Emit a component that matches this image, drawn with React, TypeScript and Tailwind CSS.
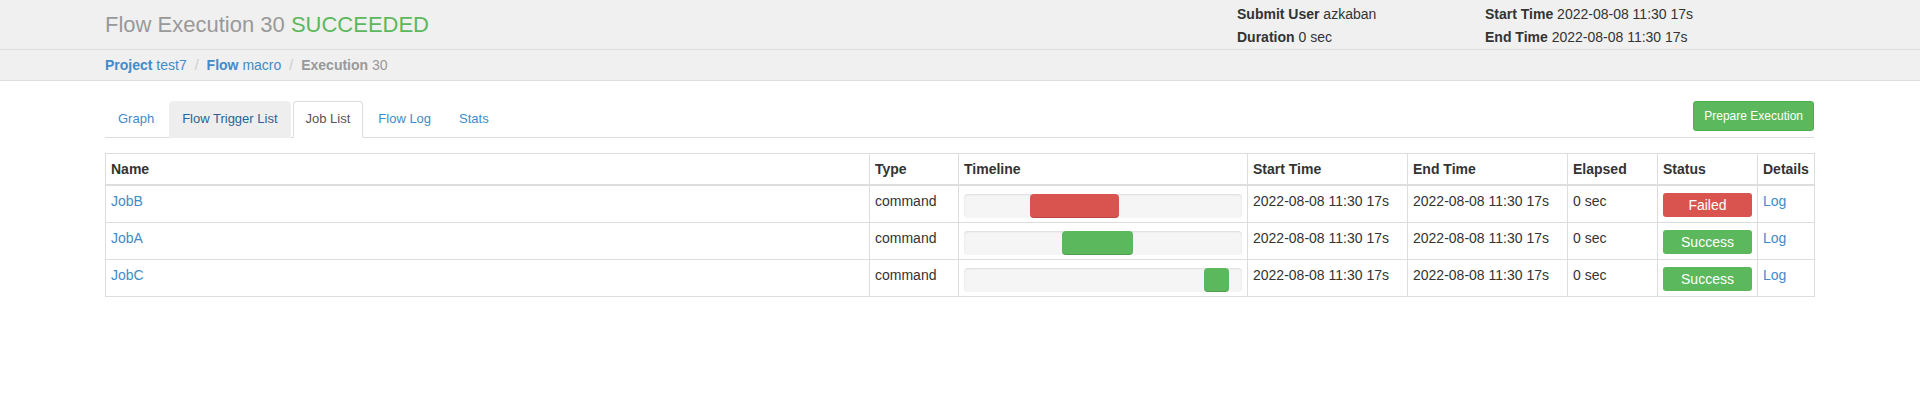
import React from 'react';

type Job = {
  name: string;
  type: string;
  offset: number;
  width: number;
  status: 'Failed' | 'Success';
};

const TIME = '2022-08-08 11:30 17s';

// 3 jobs of the flow, offset/width in % of the timeline track
const jobs: Job[] = [
  { name: 'JobB', type: 'command', offset: 23.7, width: 32, status: 'Failed' },
  { name: 'JobA', type: 'command', offset: 35.3, width: 25.6, status: 'Success' },
  { name: 'JobC', type: 'command', offset: 86.3, width: 8.9, status: 'Success' },
];

const tabs = ['Graph', 'Flow Trigger List', 'Job List', 'Flow Log', 'Stats'];

const App: React.FC = () => {
  return (
    <div className="min-h-[403px] bg-white font-['Liberation_Sans',Arial,sans-serif] text-sm leading-5 text-[#333]">
      {/* page header */}
      <div className="border-b border-[#ddd] bg-[#f0f0f0]">
        <div className="flex pl-[105px] pr-[106px]">
          <h1 className="flex-1 py-3 text-[22px] leading-[25px] text-[#999]">
            Flow Execution 30 <span className="text-[#5cb85c]">SUCCEEDED</span>
          </h1>
          <div className="grid w-[577px] grid-cols-[248px_1fr] pt-1">
            <div>
              <b>Submit User</b> azkaban
            </div>
            <div>
              <b>Start Time</b> {TIME}
            </div>
            <div>
              <b>Duration</b> 0 sec
            </div>
            <div>
              <b>End Time</b> {TIME}
            </div>
          </div>
        </div>
      </div>

      {/* breadcrumb */}
      <div className="border-b border-[#ddd] bg-[#f0f0f0] py-[5px] pl-[105px] pr-[106px]">
        <a className="text-[#428bca]">
          <b>Project</b> test7
        </a>
        <span className="px-2 text-[#ccc]">/</span>
        <a className="text-[#428bca]">
          <b>Flow</b> macro
        </a>
        <span className="px-2 text-[#ccc]">/</span>
        <span className="text-[#999]">
          <b>Execution</b> 30
        </span>
      </div>

      <div className="pl-[105px] pr-[106px] pt-5">
        {/* tabs */}
        <div className="flex items-start border-b border-[#ddd]">
          {tabs.map((t) => {
            const active = t === 'Job List';
            const hover = t === 'Flow Trigger List';
            return (
              <a
                key={t}
                className={
                  active
                    ? '-mb-px mr-[2px] rounded-t border border-[#ddd] border-b-white bg-white px-3 pb-[8px] pt-[7px] text-[13px] text-[#555]'
                    : hover
                      ? '-mb-px mr-[2px] rounded-t border border-[#eee] bg-[#eee] px-3 pb-[8px] pt-[7px] text-[13px] text-[#2a6496]'
                      : '-mb-px mr-[2px] rounded-t border border-transparent px-3 pb-[8px] pt-[7px] text-[13px] text-[#428bca]'
                }
              >
                {t}
              </a>
            );
          })}
          <button className="ml-auto rounded-[3px] border border-[#4cae4c] bg-[#5cb85c] px-[10px] py-[5px] text-xs leading-[18px] text-white">
            Prepare Execution
          </button>
        </div>

        {/* job list */}
        <table className="mt-[15px] w-full table-fixed border-collapse border border-[#ddd]">
          <colgroup>
            <col className="w-[764px]" />
            <col className="w-[89px]" />
            <col className="w-[289px]" />
            <col className="w-[160px]" />
            <col className="w-[160px]" />
            <col className="w-[90px]" />
            <col className="w-[100px]" />
            <col className="w-[57px]" />
          </colgroup>
          <thead>
            <tr>
              {['Name', 'Type', 'Timeline', 'Start Time', 'End Time', 'Elapsed', 'Status', 'Details'].map((h) => (
                <th key={h} className="border border-b-2 border-[#ddd] p-[5px] text-left font-bold">
                  {h}
                </th>
              ))}
            </tr>
          </thead>
          <tbody>
            {jobs.map((j) => (
              <tr key={j.name}>
                <td className="border border-[#ddd] p-[5px] align-top">
                  <a className="text-[#428bca]">{j.name}</a>
                </td>
                <td className="border border-[#ddd] p-[5px] align-top">{j.type}</td>
                <td className="border border-[#ddd] px-[5px] pb-[4px] pt-[8px] align-top">
                  <div className="flex h-6 rounded bg-[#f5f5f5] shadow-[inset_0_1px_2px_rgba(0,0,0,0.1)]">
                    <div
                      className={
                        j.status === 'Failed'
                          ? 'h-6 rounded bg-[#d9534f] shadow-[inset_0_-1px_0_rgba(0,0,0,0.15)]'
                          : 'h-6 rounded bg-[#5cb85c] shadow-[inset_0_-1px_0_rgba(0,0,0,0.15)]'
                      }
                      style={{ marginLeft: `${j.offset}%`, width: `${j.width}%` }}
                    />
                  </div>
                </td>
                <td className="border border-[#ddd] p-[5px] align-top">{TIME}</td>
                <td className="border border-[#ddd] p-[5px] align-top">{TIME}</td>
                <td className="border border-[#ddd] p-[5px] align-top">0 sec</td>
                <td className="border border-[#ddd] px-[5px] pb-[5px] pt-[7px] align-top">
                  <div
                    className={
                      j.status === 'Failed'
                        ? 'h-6 rounded-[3px] bg-[#d9534f] text-center leading-6 text-white'
                        : 'h-6 rounded-[3px] bg-[#5cb85c] text-center leading-6 text-white'
                    }
                  >
                    {j.status}
                  </div>
                </td>
                <td className="border border-[#ddd] p-[5px] align-top">
                  <a className="text-[#428bca]">Log</a>
                </td>
              </tr>
            ))}
          </tbody>
        </table>
      </div>
    </div>
  );
};

export default App;
